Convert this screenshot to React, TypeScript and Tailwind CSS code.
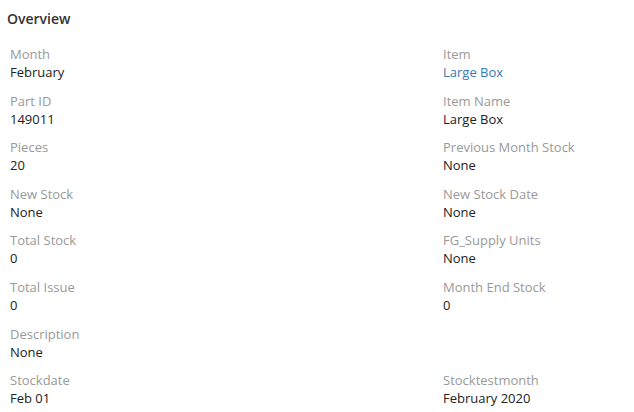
const fields: { label: string; value: string; link?: boolean }[][] = [
  [{ label: "Month", value: "February" }, { label: "Item", value: "Large Box", link: true }],
  [{ label: "Part ID", value: "149011" }, { label: "Item Name", value: "Large Box" }],
  [{ label: "Pieces", value: "20" }, { label: "Previous Month Stock", value: "None" }],
  [{ label: "New Stock", value: "None" }, { label: "New Stock Date", value: "None" }],
  [{ label: "Total Stock", value: "0" }, { label: "FG_Supply Units", value: "None" }],
  [{ label: "Total Issue", value: "0" }, { label: "Month End Stock", value: "0" }],
  [{ label: "Description", value: "None" }],
  [{ label: "Stockdate", value: "Feb 01" }, { label: "Stocktestmonth", value: "February 2020" }],
];

const Field = ({ label, value, link }: { label: string; value: string; link?: boolean }) => (
  <div className="py-[5px]">
    <div className="text-[13px] leading-[18px] text-[#999]">{label}</div>
    <div className={`text-[13px] leading-[18.6px] ${link ? "text-[#337ab7]" : "text-[#222]"}`}>{value}</div>
  </div>
);

const App = () => {
  return (
    <div className="w-[634px] h-[412px] overflow-hidden bg-white font-['Open_Sans',sans-serif]">
      <h2 className="pt-[9px] pl-[7px] text-[14px] leading-[20px] font-semibold text-[#333]">Overview</h2>
      <div className="mt-[11px] pl-[10px]">
        {fields.map((row, i) => (
          <div key={i} className="grid grid-cols-[433px_1fr]">
            {row.map((f) => (
              <Field key={f.label} {...f} />
            ))}
          </div>
        ))}
      </div>
    </div>
  );
};

export default App;
